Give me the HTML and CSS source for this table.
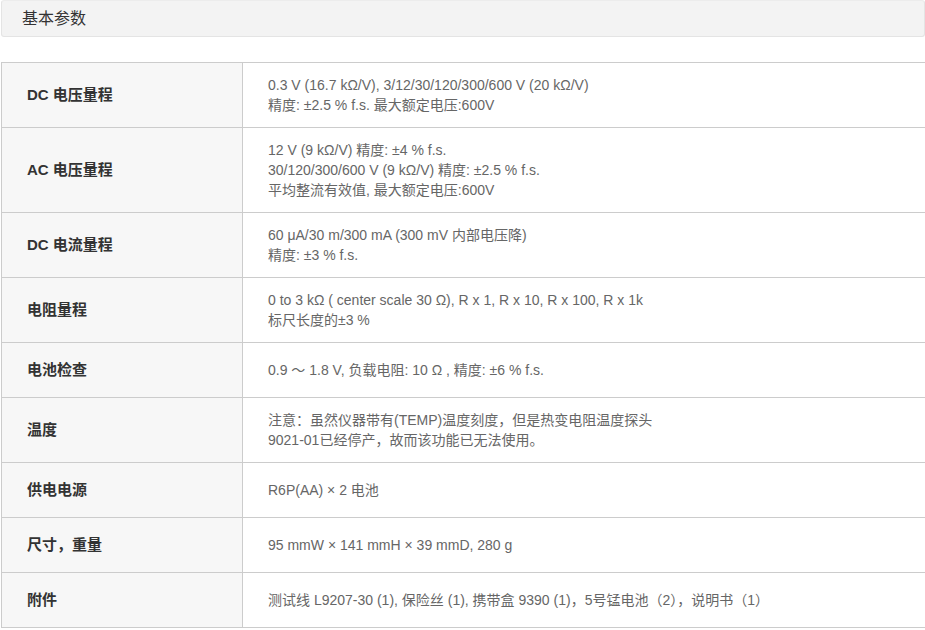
FILE: index.html
```html
<!DOCTYPE html>
<html lang="zh">
<head>
<meta charset="utf-8">
<link rel="stylesheet" href="styles.css">
</head>
<body>
<div class="page">
  <div class="section-title">基本参数</div>
  <div class="spec">
    <div class="row">
      <div class="key">DC 电压量程</div>
      <div class="val">0.3 V (16.7 kΩ/V), 3/12/30/120/300/600 V (20 kΩ/V)<br>精度: ±2.5 % f.s. 最大额定电压:600V</div>
    </div>
    <div class="row">
      <div class="key">AC 电压量程</div>
      <div class="val">12 V (9 kΩ/V) 精度: ±4 % f.s.<br>30/120/300/600 V (9 kΩ/V) 精度: ±2.5 % f.s.<br>平均整流有效值, 最大额定电压:600V</div>
    </div>
    <div class="row">
      <div class="key">DC 电流量程</div>
      <div class="val">60 μA/30 m/300 mA (300 mV 内部电压降)<br>精度: ±3 % f.s.</div>
    </div>
    <div class="row">
      <div class="key">电阻量程</div>
      <div class="val">0 to 3 kΩ ( center scale 30 Ω), R x 1, R x 10, R x 100, R x 1k<br>标尺长度的±3 %</div>
    </div>
    <div class="row">
      <div class="key">电池检查</div>
      <div class="val">0.9 ～ 1.8 V, 负载电阻: 10 Ω , 精度: ±6 % f.s.</div>
    </div>
    <div class="row">
      <div class="key">温度</div>
      <div class="val">注意：虽然仪器带有(TEMP)温度刻度，但是热变电阻温度探头<br>9021-01已经停产，故而该功能已无法使用。</div>
    </div>
    <div class="row">
      <div class="key">供电电源</div>
      <div class="val">R6P(AA) × 2 电池</div>
    </div>
    <div class="row">
      <div class="key">尺寸，重量</div>
      <div class="val">95 mmW × 141 mmH × 39 mmD, 280 g</div>
    </div>
    <div class="row">
      <div class="key">附件</div>
      <div class="val">测试线 L9207-30 (1), 保险丝 (1), 携带盒 9390 (1)，5号锰电池（2），说明书（1）</div>
    </div>
  </div>
</div>
</body>
</html>
```

FILE: styles.css
```css
html, body {
  margin: 0;
  padding: 0;
  background: #ffffff;
}

body {
  font-family: "Liberation Sans", Arial, "Noto Sans CJK SC", sans-serif;
  color: #333333;
}

.page {
  padding-left: 1px;
  width: 940px;
}

.section-title {
  box-sizing: border-box;
  width: 924px;
  height: 37px;
  border: 1px solid #e4e4e4;
  border-top-color: #ececec;
  border-radius: 3px;
  background: #f3f3f3;
  padding-left: 20px;
  line-height: 35px;
  font-size: 16px;
  color: #333333;
}

.spec {
  margin-top: 25px;
  border-top: 1px solid #cccccc;
  border-left: 1px solid #cccccc;
}

.row {
  display: grid;
  grid-template-columns: 241px 1fr;
  min-height: 54px;
  border-bottom: 1px solid #cccccc;
}

.key {
  display: flex;
  align-items: center;
  background: #f7f7f7;
  border-right: 1px solid #cccccc;
  padding: 12px 25px;
  font-size: 15px;
  line-height: 20px;
  font-weight: bold;
  color: #333333;
}

.val {
  display: flex;
  flex-direction: column;
  justify-content: center;
  padding: 12px 25px;
  font-size: 14px;
  line-height: 20px;
  color: #666666;
}
```
